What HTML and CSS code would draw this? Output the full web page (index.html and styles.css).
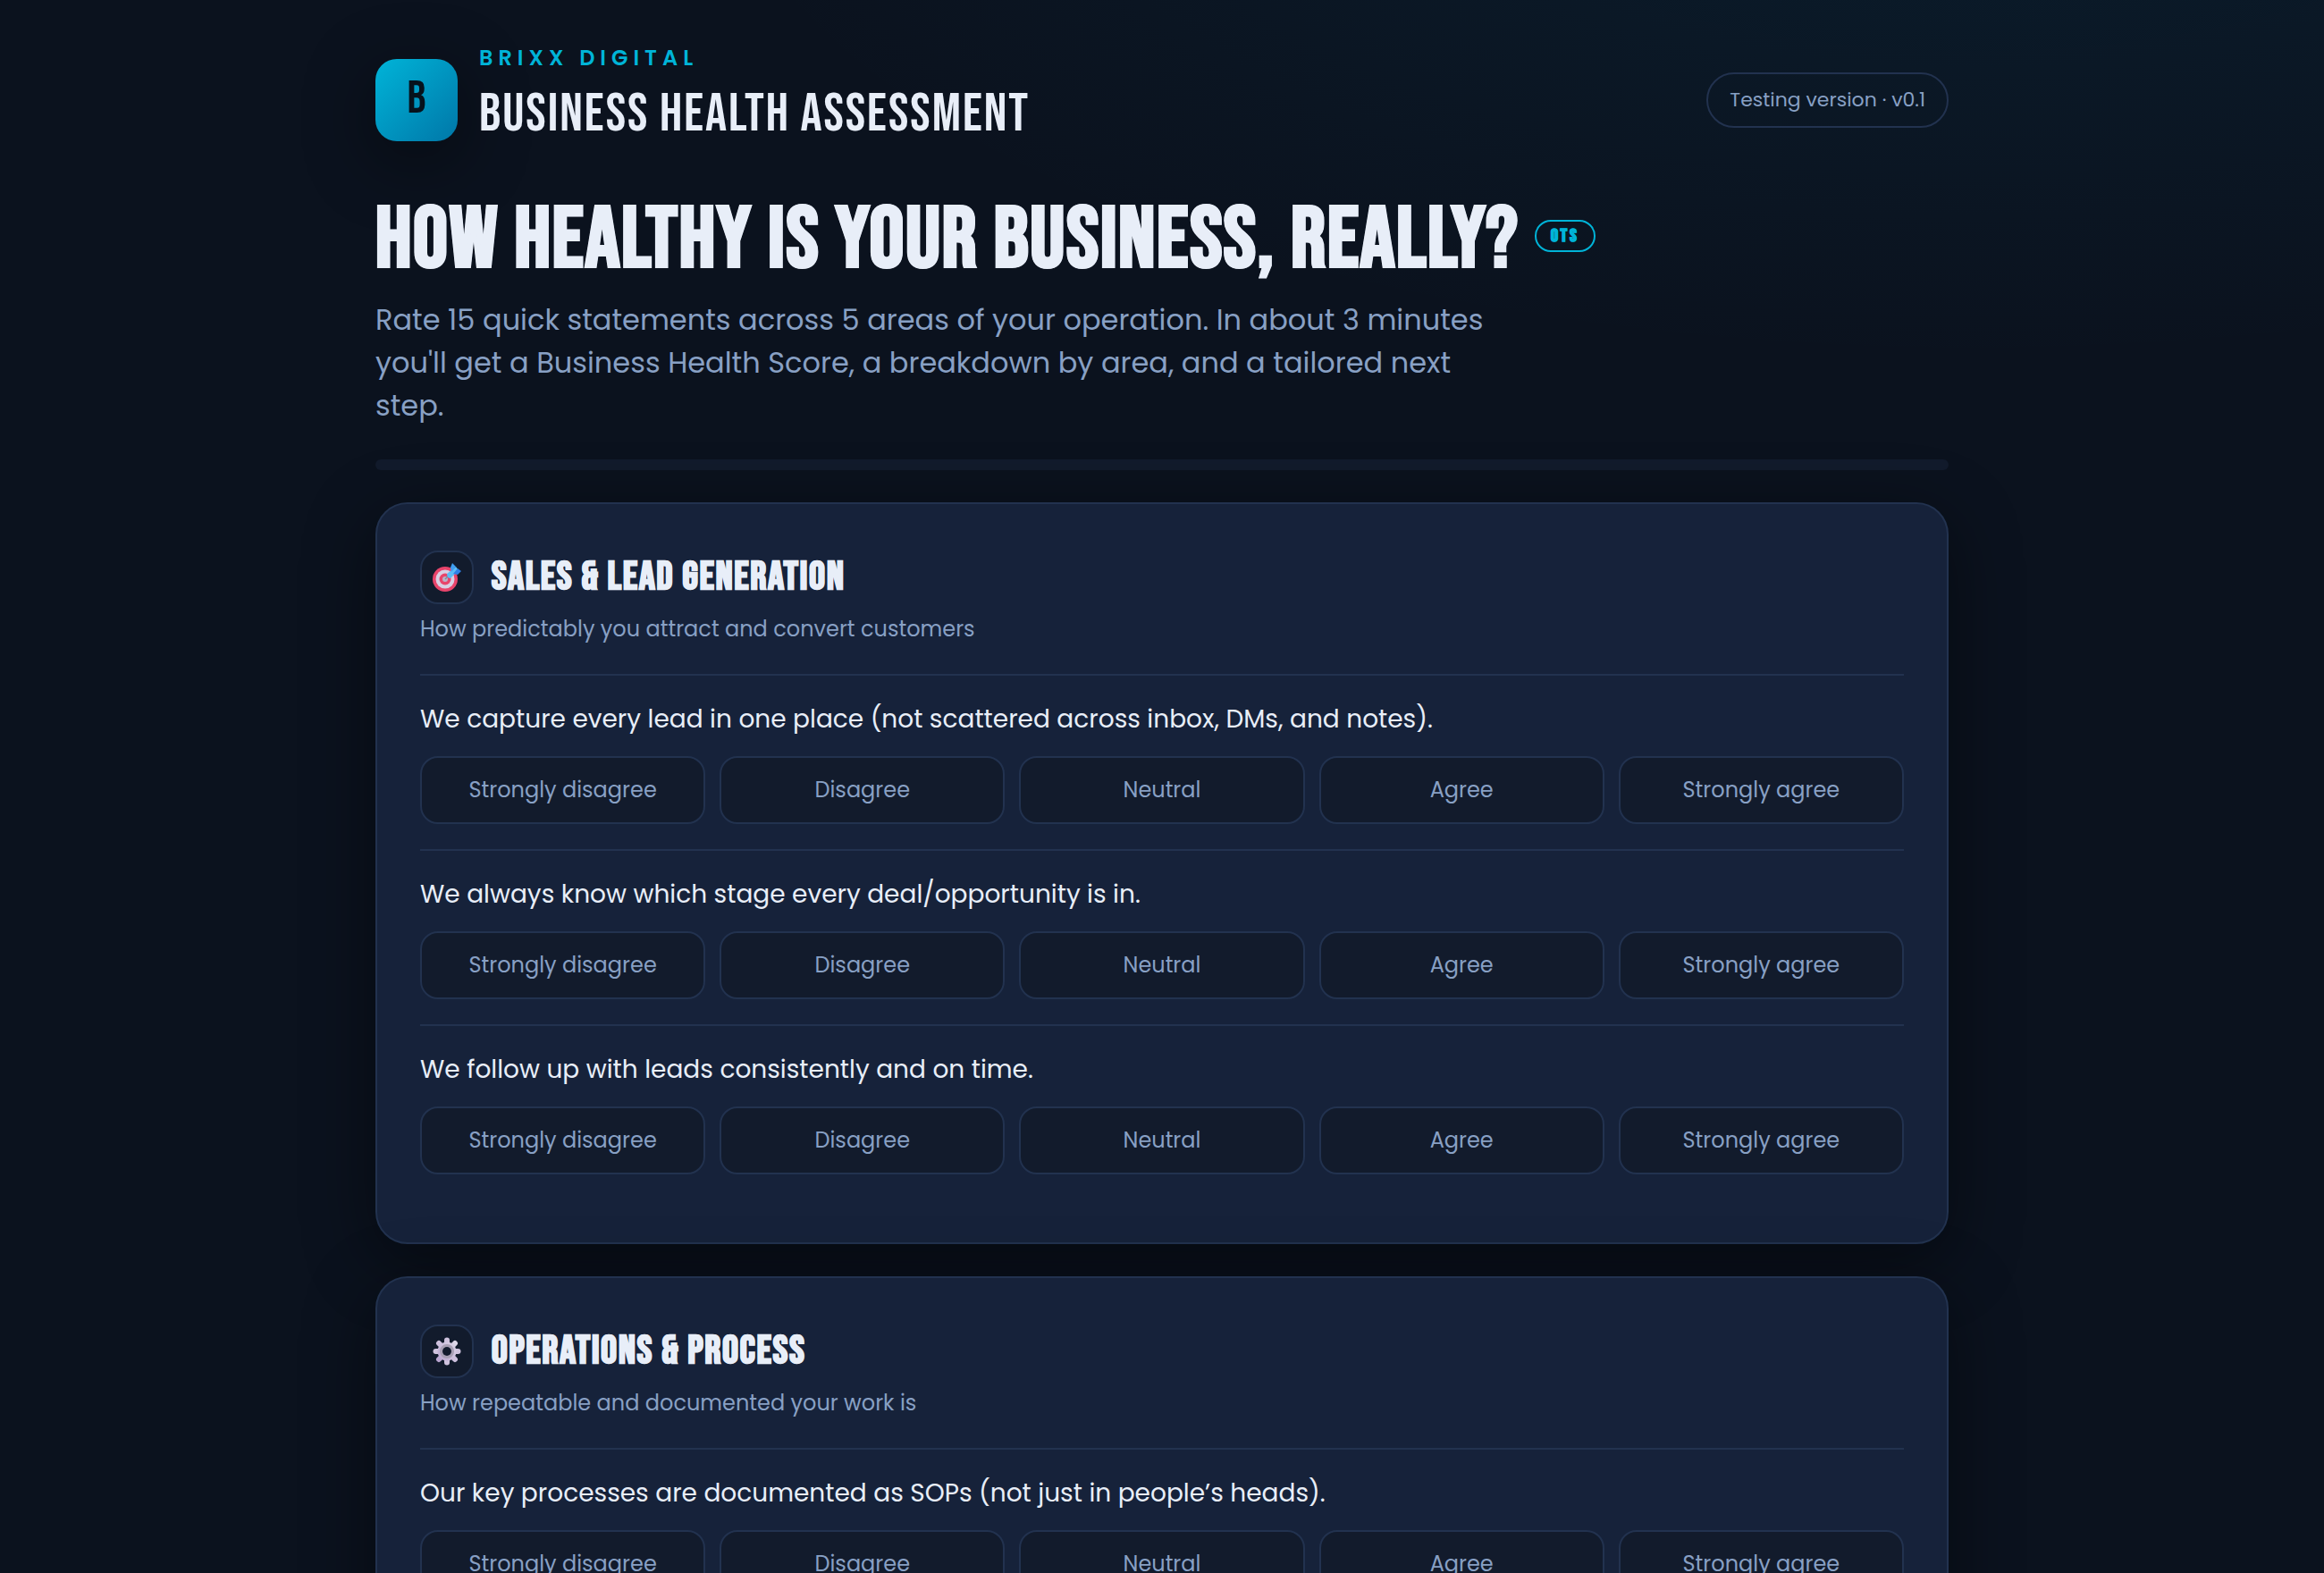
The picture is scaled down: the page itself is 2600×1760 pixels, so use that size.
FILE: index.html
```
<!DOCTYPE html>
<html lang="en">
  <head>
    <meta charset="UTF-8" />
    <meta name="viewport" content="width=device-width, initial-scale=1.0" />
    <title>Business Health Assessment</title>
    <link rel="stylesheet" href="styles.css">
  </head>
  <body>
    <div class="wrap">
      <header class="topbar">
        <div class="brand">
          <div class="logo">B</div>
          <div class="brand-text">
            <div class="brand-name">BRIXX DIGITAL</div>
            <div class="brand-title">BUSINESS HEALTH ASSESSMENT</div>
          </div>
        </div>
        <span class="pill">Testing version · v0.1</span>
      </header>

      <main>
        <section class="hero">
          <h1>HOW HEALTHY IS YOUR BUSINESS, REALLY? <span class="tag">OTS</span></h1>
          <p>Rate 15 quick statements across 5 areas of your operation. In about 3 minutes you'll get a Business Health Score, a breakdown by area, and a tailored next step.</p>
        </section>

        <div class="progress"></div>

        <form>
          <section class="card">
            <div class="card-head">
              <div class="icon">
                <svg viewBox="0 0 32 32" width="32" height="32">
                  <circle cx="14" cy="18" r="14" fill="#e8446b" />
                  <circle cx="14" cy="18" r="10.5" fill="#d8cfe3" />
                  <circle cx="14" cy="18" r="6.5" fill="#e8446b" />
                  <circle cx="14" cy="18" r="3" fill="#b9b2c8" />
                  <path d="M14 18L18 14" stroke="#7d8a9c" stroke-width="1.5" />
                  <path d="M16 12L26 4L29 8L20 17Q16 17 16 12z" fill="#5cbcf6" />
                  <path d="M20 5L22 0L26 4L21 10z" fill="#3f9df0" />
                  <path d="M23 12L28 6L32 9L28 13z" fill="#2f80e6" />
                </svg>
              </div>
              <h2>SALES &amp; LEAD GENERATION</h2>
            </div>
            <p class="card-desc">How predictably you attract and convert customers</p>

            <fieldset class="question">
              <legend>We capture every lead in one place (not scattered across inbox, DMs, and notes).</legend>
              <div class="options">
                <label class="option"><input type="radio" name="q1" value="1" />Strongly disagree</label>
                <label class="option"><input type="radio" name="q1" value="2" />Disagree</label>
                <label class="option"><input type="radio" name="q1" value="3" />Neutral</label>
                <label class="option"><input type="radio" name="q1" value="4" />Agree</label>
                <label class="option"><input type="radio" name="q1" value="5" />Strongly agree</label>
              </div>
            </fieldset>
            <fieldset class="question">
              <legend>We always know which stage every deal/opportunity is in.</legend>
              <div class="options">
                <label class="option"><input type="radio" name="q2" value="1" />Strongly disagree</label>
                <label class="option"><input type="radio" name="q2" value="2" />Disagree</label>
                <label class="option"><input type="radio" name="q2" value="3" />Neutral</label>
                <label class="option"><input type="radio" name="q2" value="4" />Agree</label>
                <label class="option"><input type="radio" name="q2" value="5" />Strongly agree</label>
              </div>
            </fieldset>
            <fieldset class="question">
              <legend>We follow up with leads consistently and on time.</legend>
              <div class="options">
                <label class="option"><input type="radio" name="q3" value="1" />Strongly disagree</label>
                <label class="option"><input type="radio" name="q3" value="2" />Disagree</label>
                <label class="option"><input type="radio" name="q3" value="3" />Neutral</label>
                <label class="option"><input type="radio" name="q3" value="4" />Agree</label>
                <label class="option"><input type="radio" name="q3" value="5" />Strongly agree</label>
              </div>
            </fieldset>
          </section>

          <section class="card">
            <div class="card-head">
              <div class="icon">
                <svg viewBox="-16 -16 32 32" width="32" height="32">
                  <defs>
                    <linearGradient id="gear" x1="1" y1="0" x2="0" y2="1">
                      <stop offset="0" stop-color="#ddd6e8" />
                      <stop offset="1" stop-color="#b9a5d0" />
                    </linearGradient>
                  </defs>
                  <g stroke-width="6" stroke-linecap="round">
                    <path d="M0 -12.5V12.5" stroke="#cfc3de" />
                    <path d="M-12.5 0H12.5" stroke="#cfc3de" />
                    <path d="M-9 -9L9 9" stroke="#cdc0dd" />
                    <path d="M9 -9L-9 9" stroke="url(#gear)" />
                  </g>
                  <circle r="10.5" fill="url(#gear)" />
                  <circle r="6.5" fill="none" stroke="#a79fb4" stroke-width="3" />
                  <circle r="5" fill="#121b2d" />
                </svg>
              </div>
              <h2>OPERATIONS &amp; PROCESS</h2>
            </div>
            <p class="card-desc">How repeatable and documented your work is</p>

            <fieldset class="question">
              <legend>Our key processes are documented as SOPs (not just in people’s heads).</legend>
              <div class="options">
                <label class="option"><input type="radio" name="q4" value="1" />Strongly disagree</label>
                <label class="option"><input type="radio" name="q4" value="2" />Disagree</label>
                <label class="option"><input type="radio" name="q4" value="3" />Neutral</label>
                <label class="option"><input type="radio" name="q4" value="4" />Agree</label>
                <label class="option"><input type="radio" name="q4" value="5" />Strongly agree</label>
              </div>
            </fieldset>
          </section>
        </form>
      </main>
    </div>
  </body>
</html>
```
FILE: styles.css
```
:root {
  --bg: #0b121e;
  --surface: #121b2c;
  --card: #16223a;
  --line: #22324f;
  --text: #e8eef8;
  --muted: #88a0c4;
  --accent: #00b4d8;
  --shadow: 0 20px 80px rgba(0, 0, 0, 0.45);
  --display: 'Bebas Neue', 'Roboto Condensed', sans-serif;
  --body: Poppins, Inter, sans-serif;
}
* {
  box-sizing: border-box;
}
body {
  margin: 0;
  font-family: var(--body);
  font-size: 32px;
  line-height: 48px;
  color: var(--text);
  background: radial-gradient(2400px 1000px at 85% -10%, rgba(0, 160, 216, 0.08), transparent 60%) no-repeat var(--bg);
}
.wrap {
  max-width: 1840px;
  margin: 0 auto;
  padding: 48px 40px;
}
.topbar {
  display: flex;
  align-items: center;
  justify-content: space-between;
  height: 128px;
}
.brand {
  display: flex;
  align-items: center;
  gap: 24px;
}
.logo {
  display: flex;
  align-items: center;
  justify-content: center;
  width: 92px;
  height: 92px;
  padding-bottom: 2px;
  border-radius: 24px;
  background: linear-gradient(135deg, #00b4d8, #0077a8);
  box-shadow: var(--shadow);
  color: #06121c;
  font-family: var(--display);
  font-size: 52px;
}
.brand-text {
  padding-bottom: 4px;
}
.brand-name {
  font-size: 24px;
  font-weight: 600;
  line-height: 36px;
  letter-spacing: 6px;
  color: var(--accent);
}
.brand-title {
  font-family: var(--display);
  font-size: 60px;
  line-height: 90px;
  letter-spacing: 2px;
}
.pill {
  padding: 11px 24px;
  border: 2px solid var(--line);
  border-radius: 999px;
  font-size: 22px;
  line-height: 36px;
  color: var(--muted);
}
.hero {
  margin-top: 44px;
}
h1,
h2 {
  margin: 0;
  font-family: var(--display);
  letter-spacing: 2px;
  -webkit-text-stroke: 1px;
}
h1 {
  font-size: 96px;
  line-height: 100px;
}
h2 {
  font-size: 44px;
}
.tag {
  display: inline-block;
  padding: 0 16px;
  border: 2px solid var(--accent);
  border-radius: 999px;
  font-size: 20px;
  line-height: 32px;
  letter-spacing: 3px;
  vertical-align: middle;
  color: var(--accent);
}
.hero p {
  max-width: 1280px;
  margin: 14px 0 0;
  color: var(--muted);
}
.progress {
  height: 12px;
  margin: 36px 0;
  border-radius: 6px;
  background: var(--surface);
}
.card {
  margin-bottom: 36px;
  padding: 48px;
  border: 2px solid var(--line);
  border-radius: 36px;
  background: var(--card);
  box-shadow: var(--shadow);
}
.card-head {
  display: flex;
  align-items: center;
  gap: 20px;
  height: 68px;
}
.icon {
  display: flex;
  align-items: center;
  justify-content: center;
  width: 60px;
  height: 60px;
  border: 2px solid var(--line);
  border-radius: 20px;
  background: var(--surface);
}
.card-desc {
  margin: 4px 0 30px;
  font-size: 24px;
  line-height: 40px;
  color: var(--muted);
}
.question {
  min-width: 0;
  margin: 0;
  padding: 28px 0;
  border: 0;
  border-top: 2px solid var(--line);
}
legend {
  float: left;
  width: 100%;
  padding: 0;
  margin-bottom: 20px;
  font-size: 28px;
  line-height: 42px;
}
.options {
  clear: both;
  display: grid;
  grid-template-columns: repeat(5, 1fr);
  gap: 16px;
}
.option {
  position: relative;
  display: flex;
  align-items: center;
  justify-content: center;
  height: 76px;
  border: 2px solid var(--line);
  border-radius: 20px;
  background: var(--surface);
  font-size: 24px;
  color: var(--muted);
  cursor: pointer;
}
.option input {
  position: absolute;
  opacity: 0;
}
.option:has(input:checked) {
  border-color: var(--accent);
  color: var(--text);
}
```
